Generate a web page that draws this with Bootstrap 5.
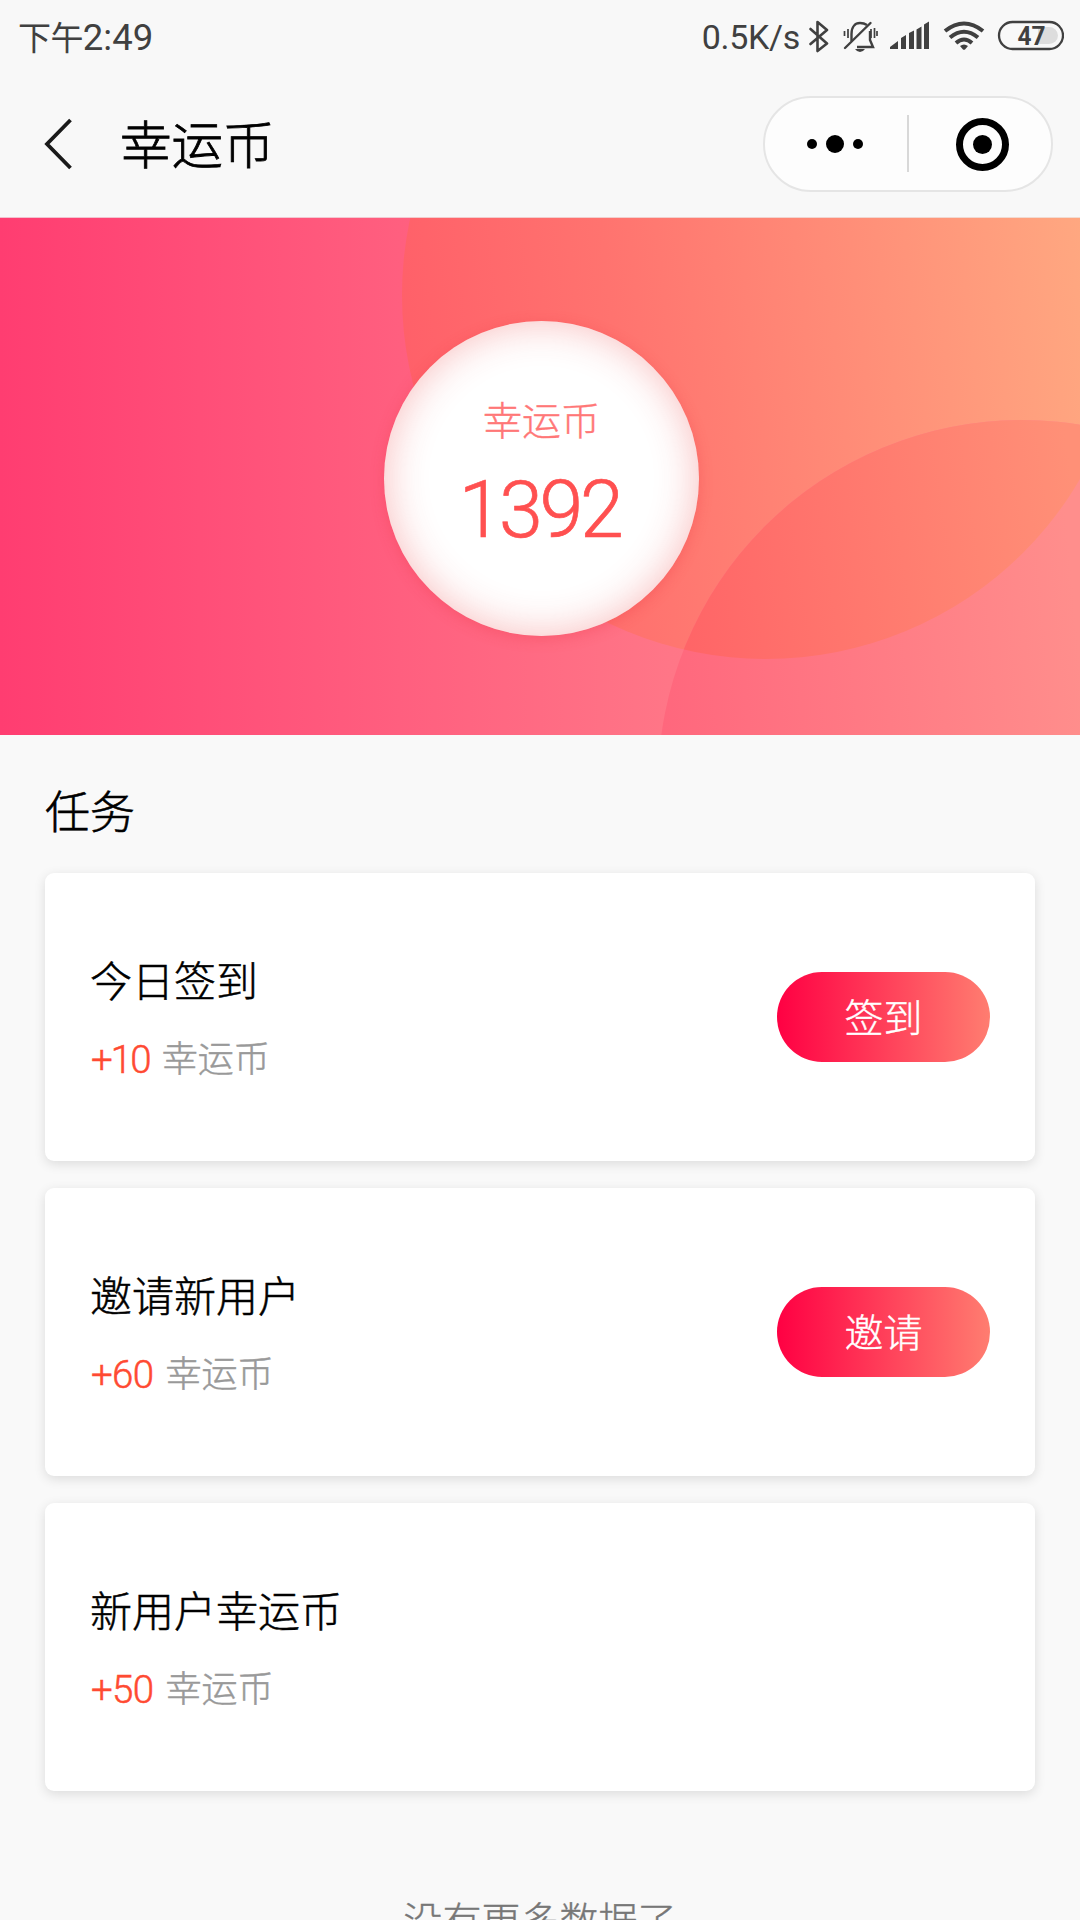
<!DOCTYPE html>
<html lang="zh-CN">
<head>
<meta charset="utf-8">
<meta name="viewport" content="width=device-width, initial-scale=1">
<title>幸运币</title>
<link href="https://cdn.jsdelivr.net/npm/bootstrap@5.3.0/dist/css/bootstrap.min.css" rel="stylesheet">
<style>
body{font-family:Roboto,"Noto Sans CJK SC",sans-serif;background:#f9f9f9;color:#000;font-weight:300}
.screen{width:1080px;height:1920px;overflow:hidden}
.topbar{height:217px;background:#f8f8f8}
.status{height:74px;padding:0 16px 0 18px;color:#404040;line-height:74px;font-weight:400}
.status-time{font-size:36.5px;padding-top:2px}
.status-time .cjk{font-size:33px;letter-spacing:-.6px}
.speed{font-size:34px;letter-spacing:-.3px;margin-right:9px}
.nav-row{height:143px;padding:0 27px 4px 44px}
.page-title{font-size:51.5px;line-height:60px;font-weight:300;-webkit-text-stroke:.8px;margin-left:47px;padding-top:6px}
.capsule{width:290px;height:96px;border:2px solid #e5e5e5;background:#fdfdfd}
.hero{height:518px}
.coin{left:384px;top:104px;width:315px;height:315px;background:#fff;box-shadow:inset 0 0 42px rgba(232,50,50,.32),0 3px 14px rgba(232,50,60,.28);padding-top:78px}
.coin-label{font-size:39px;line-height:46px;color:#ff7777;-webkit-text-stroke:.4px}
.coin-total{font-size:79px;line-height:90px;color:#ff5050;letter-spacing:-3.4px;margin-top:20px;padding-right:4px;-webkit-text-stroke:.7px}
.tasks{padding:49px 45px 0}
.section-title{font-size:45px;line-height:60px;margin-bottom:29px;-webkit-text-stroke:.6px}
.task{height:288px;border-radius:9px;box-shadow:0 3px 12px rgba(0,0,0,.12);padding:0 45px;margin-bottom:27px}
.task-text{padding-top:5px}
.task-name{font-size:42px;line-height:50px;-webkit-text-stroke:.5px}
.task-gain{font-size:36px;line-height:44px;margin-top:30px;color:#999;-webkit-text-stroke:.5px}
.task-gain b{font-weight:300;font-size:38.5px;color:#ff4a32;letter-spacing:-.7px;padding-left:1px;margin-right:12px}
.task-gain b.tight{letter-spacing:-1.9px}
.btn-task{width:213px;height:90px;padding:4px 0 0;border:0;font-size:39px;line-height:86px;font-weight:300;color:#fff;background:linear-gradient(90deg,#ff0043,#ff7d70);-webkit-text-stroke:.4px}
.no-more{font-size:39px;line-height:50px;color:#777;margin-top:106px;-webkit-text-stroke:.4px}
</style>
</head>
<body>
<div class="screen">
  <header class="topbar">
    <div class="status d-flex justify-content-between align-items-center">
      <div class="status-time text-nowrap"><span class="cjk">下午</span>2:49</div>
      <div class="d-flex align-items-center">
        <span class="speed">0.5K/s</span>
        <svg width="255" height="40" viewBox="809 17 255 40" fill="none" stroke="#404040">
          <path d="M810.500 29 827 43.500 817.500 51V22L827 30 810.500 44" stroke-width="2.600" stroke-linecap="round" stroke-linejoin="round"/>
          <path d="M851.500 41V34C851.500 27 855 23 860 23Q864 23 867 25M870 31V40L873 47H857" stroke-width="2.400"/>
          <path d="M870.500 23 845 48" stroke-width="2.400" stroke-linecap="round"/>
          <path d="M855 49H865Q863 52 860 52T855 49Z" fill="#404040" stroke="none"/>
          <path d="M844.500 31v5M848 29v9M871 29v9M874.500 28v10M877 31v5" stroke-width="1.700"/>
          <path d="M890 49v-2l8-6v8zM901 49V38l5-3v14zM909 49V33l5-2.500V49zM916.500 49V29.500l5-3V49zM924 49V24.500l5-3V49z" fill="#404040" stroke="none"/>
          <path d="M945 31Q964 16 983 31M950 37.500Q964 26 978 37.500M956 43Q964 36 972 43" stroke-width="4"/>
          <path d="M960 46Q964 43 968 46L965 49.500Q964 50 963 49.500Z" fill="#404040" stroke="none"/>
          <path d="M1038 27h11a9 8.500 0 0 1 0 17h-11z" fill="#ddd" stroke="none"/>
          <rect x="999" y="22" width="64" height="27" rx="13.500" stroke-width="2.300"/>
          <text x="1017.500" y="44.500" font-family="Roboto" font-weight="700" font-size="26" textLength="28" lengthAdjust="spacingAndGlyphs" fill="#404040" stroke="none">47</text>
        </svg>
      </div>
    </div>
    <div class="nav-row d-flex align-items-center">
      <svg width="29" height="52" viewBox="44 118 29 52" fill="none"><path d="M70.500 120 47 144 70.500 168" stroke="#1a1a1a" stroke-width="3.800"/></svg>
      <h1 class="page-title mb-0">幸运币</h1>
      <div class="capsule rounded-pill ms-auto d-flex align-items-center justify-content-center">
        <svg width="286" height="92" viewBox="765 98 286 92">
          <circle cx="812" cy="144" r="5"/><circle cx="835" cy="144" r="9"/><circle cx="858" cy="144" r="5"/>
          <path d="M908 115v57" stroke="#d8d8d8" stroke-width="2"/>
          <circle cx="982.500" cy="144.500" r="23" fill="none" stroke="#000" stroke-width="7"/><circle cx="982.500" cy="144.500" r="9.500"/>
        </svg>
      </div>
    </div>
  </header>

  <section class="hero position-relative overflow-hidden">
    <svg class="d-block" width="1080" height="518" viewBox="0 217 1080 518">
      <defs>
        <linearGradient id="base" gradientUnits="userSpaceOnUse" x1="0" y1="0" x2="1080" y2="0"><stop offset="0" stop-color="#ff3d71"/><stop offset=".37" stop-color="#ff5f7f"/><stop offset=".62" stop-color="#ff7687"/><stop offset="1" stop-color="#ff8f8f"/></linearGradient>
        <linearGradient id="amber" gradientUnits="userSpaceOnUse" x1="402" y1="340" x2="1100" y2="260"><stop offset="0" stop-color="#ff6069"/><stop offset=".3" stop-color="#ff736f"/><stop offset="1" stop-color="#ffa981"/></linearGradient>
        <linearGradient id="rose" gradientUnits="userSpaceOnUse" x1="660" y1="700" x2="1080" y2="660"><stop offset="0" stop-color="#ff677d"/><stop offset="1" stop-color="#ff8e8c"/></linearGradient>
        <linearGradient id="blend" gradientUnits="userSpaceOnUse" x1="680" y1="590" x2="1080" y2="530"><stop offset="0" stop-color="#ff6567"/><stop offset="1" stop-color="#ff9077"/></linearGradient>
        <clipPath id="inAmber"><circle cx="766" cy="295" r="364"/></clipPath>
      </defs>
      <rect y="217" width="1080" height="518" fill="url(#base)"/>
      <circle cx="766" cy="295" r="364" fill="url(#amber)"/>
      <circle cx="1022" cy="784" r="364" fill="url(#rose)"/>
      <circle cx="1022" cy="784" r="364" fill="url(#blend)" clip-path="url(#inAmber)"/>
      <path d="M0 217.500H1080" stroke="#eee" stroke-opacity=".75"/>
    </svg>
    <div class="coin position-absolute rounded-circle text-center">
      <div class="coin-label">幸运币</div>
      <div class="coin-total">1392</div>
    </div>
  </section>

  <main class="tasks">
    <h2 class="section-title fw-light">任务</h2>
    <div class="task bg-white d-flex align-items-center justify-content-between">
      <div class="task-text"><div class="task-name">今日签到</div><div class="task-gain d-flex"><b class="tight">+10</b>幸运币</div></div>
      <button class="btn btn-task rounded-pill">签到</button>
    </div>
    <div class="task bg-white d-flex align-items-center justify-content-between">
      <div class="task-text"><div class="task-name">邀请新用户</div><div class="task-gain d-flex"><b>+60</b>幸运币</div></div>
      <button class="btn btn-task rounded-pill">邀请</button>
    </div>
    <div class="task bg-white d-flex align-items-center justify-content-between">
      <div class="task-text"><div class="task-name">新用户幸运币</div><div class="task-gain d-flex"><b>+50</b>幸运币</div></div>
    </div>
    <div class="no-more text-center">没有更多数据了</div>
  </main>
</div>
<script src="https://cdn.jsdelivr.net/npm/bootstrap@5.3.0/dist/js/bootstrap.bundle.min.js"></script>
</body>
</html>
